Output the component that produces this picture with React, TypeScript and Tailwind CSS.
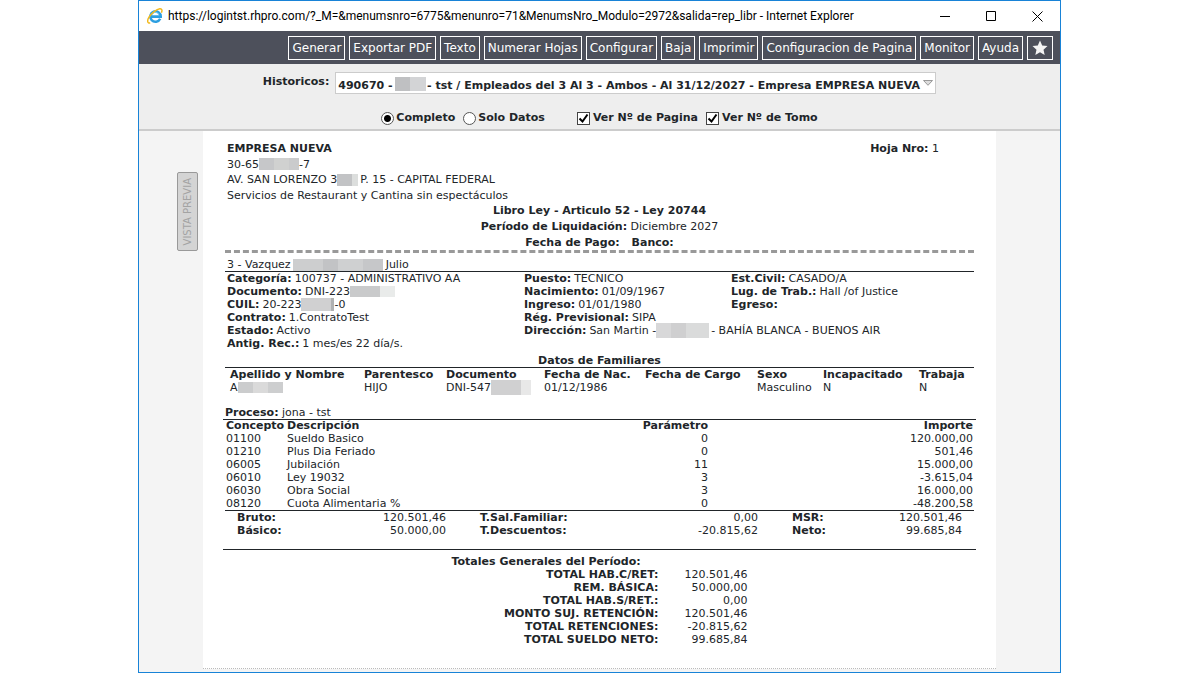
import React, { useState } from "react";

/* TYPES */
type Field = {
  label: string;
  value: React.ReactNode;
};

type RedactedProps = {
  parts: string[];
  className?: string;
};

/* DATA */
const actions: string[] = [
  "Generar",
  "Exportar PDF",
  "Texto",
  "Numerar Hojas",
  "Configurar",
  "Baja",
  "Imprimir",
  "Configuracion de Pagina",
  "Monitor",
  "Ayuda",
];

const concepts: string[][] = [
  ["01100", "Sueldo Basico", "0", "120.000,00"],
  ["01210", "Plus Dia Feriado", "0", "501,46"],
  ["06005", "Jubilación", "11", "15.000,00"],
  ["06010", "Ley 19032", "3", "-3.615,04"],
  ["06030", "Obra Social", "3", "16.000,00"],
  ["08120", "Cuota Alimentaria %", "0", "-48.200,58"],
];

const totals: string[][] = [
  ["TOTAL HAB.C/RET:", "120.501,46"],
  ["REM. BÁSICA:", "50.000,00"],
  ["TOTAL HAB.S/RET.:", "0,00"],
  ["MONTO SUJ. RETENCIÓN:", "120.501,46"],
  ["TOTAL RETENCIONES:", "-20.815,62"],
  ["TOTAL SUELDO NETO:", "99.685,84"],
];

/* REDACTED BLOCK */
const Redacted: React.FC<RedactedProps> = ({ parts, className = "h-3" }) => (
  <span className={`flex shrink-0 ${className}`}>
    {parts.map((part, i) => (
      <span
        key={i}
        className={part}
      />
    ))}
  </span>
);

/* TITLE BAR */
const TitleBar = () => (
  <div className="flex h-[30px] items-center bg-white pl-2 font-[Roboto,'Segoe_UI',sans-serif] text-xs text-black">
    <svg
      className="size-4 shrink-0"
      viewBox="0 0 16 16"
      fill="none">
      <path
        d="M13.2 10.8A5.2 5.2 0 1 1 13.7 8.6H4.6"
        stroke="#2d9fe0"
        strokeWidth="2.6"
      />
      <path
        d="M4.6 7.2A3.8 3.8 0 0 1 12 7.2"
        stroke="#7fd0f5"
        strokeWidth="1"
      />
      <path
        d="M3.2 15C.4 15.6-.2 12.8 2 9.2 4.6 5 9.6 1.2 12.8.8c2.4-.2 2.6 1.8 1.6 4"
        stroke="#f2b91d"
        strokeWidth="1.5"
      />
    </svg>
    <span className="ml-[5px] min-w-0 flex-1 truncate">
      https://logintst.rhpro.com/?_M=&amp;menumsnro=6775&amp;menunro=71&amp;MenumsNro_Modulo=2972&amp;salida=rep_libr
      - Internet Explorer
    </span>
    <button
      aria-label="Minimizar"
      className="flex h-full w-[46px] shrink-0 items-center justify-center">
      <svg
        className="size-[11px]"
        viewBox="0 0 11 11"
        stroke="black">
        <path d="M0 5.5h10" />
      </svg>
    </button>
    <button
      aria-label="Maximizar"
      className="flex h-full w-[46px] shrink-0 items-center justify-center">
      <svg
        className="size-[11px]"
        viewBox="0 0 11 11"
        fill="none"
        stroke="black">
        <path d="M.5.5h9v9h-9z" />
      </svg>
    </button>
    <button
      aria-label="Cerrar"
      className="flex h-full w-[46px] shrink-0 items-center justify-center">
      <svg
        className="size-[11px]"
        viewBox="0 0 11 11"
        stroke="black">
        <path d="M.5.5l10 10M10.5.5l-10 10" />
      </svg>
    </button>
  </div>
);

/* TOOLBAR */
const Toolbar = () => (
  <div className="flex h-[33px] items-center justify-end gap-1 bg-[#4d505b] pr-[7px] text-xs text-white">
    {actions.map((action) => (
      <button
        key={action}
        className="h-6 border border-white px-[3px] whitespace-nowrap">
        {action}
      </button>
    ))}
    <button
      aria-label="Favoritos"
      className="flex h-6 w-[26px] items-center justify-center border border-white">
      <svg
        className="size-4"
        viewBox="0 0 16 16"
        fill="#f4f4f4">
        <path d="M8 .6l2.2 5 5.3.5-4 3.6 1.2 5.4L8 12.3l-4.7 2.8 1.2-5.4-4-3.6 5.3-.5z" />
      </svg>
    </button>
  </div>
);

/* FILTERS */
const Filters = () => {
  const [mode, setMode] = useState<string>("completo");
  const [showPage, setShowPage] = useState<boolean>(true);
  const [showVolume, setShowVolume] = useState<boolean>(true);

  const modes = [
    { id: "completo", text: "Completo" },
    { id: "solo", text: "Solo Datos" },
  ];

  const checks = [
    { text: "Ver Nº de Pagina", value: showPage, set: setShowPage },
    { text: "Ver Nº de Tomo", value: showVolume, set: setShowVolume },
  ];

  return (
    <div className="flex h-[67px] flex-col border-b-2 border-[#ccc] bg-[#eee] pt-2 font-bold">
      <div className="flex justify-center gap-[6px]">
        <label
          htmlFor="historicos"
          className="pt-[3px]">
          Historicos:
        </label>
        <div className="relative">
          <select
            id="historicos"
            className="block h-[22px] w-[601px] appearance-none border border-[#ccc] bg-white pl-[2px] pt-1 font-bold">
            <option>
              {"490670 -" +
                "\u00a0".repeat(9) +
                "- tst / Empleados del 3 Al 3 - Ambos - Al 31/12/2027 - Empresa EMPRESA NUEVA"}
            </option>
          </select>
          <div className="pointer-events-none absolute top-[5px] left-[60px]">
            <Redacted
              className="h-[14px]"
              parts={["w-[15px] bg-[#bfc0c2]", "w-4 bg-[#d3d4d6]"]}
            />
          </div>
          <svg
            className="pointer-events-none absolute top-2 right-[3px] h-[6px] w-[10px]"
            viewBox="0 0 10 6"
            fill="#ddd"
            stroke="#999">
            <path d="M.5.5h9L5 5.3z" />
          </svg>
        </div>
      </div>

      <div className="mt-4 flex items-center justify-center">
        {modes.map((item) => (
          <label
            key={item.id}
            className="mr-2 flex items-center gap-[2px]">
            <input
              type="radio"
              name="modo"
              checked={mode === item.id}
              onChange={() => setMode(item.id)}
              className="mt-[2px] size-[13px] appearance-none rounded-full border border-[#555] bg-white checked:bg-[radial-gradient(circle,#000_3px,#fff_4px)]"
            />
            {item.text}
          </label>
        ))}
        <div className="ml-6 flex gap-2">
          {checks.map((item) => (
            <label
              key={item.text}
              className="flex items-center gap-[3px]">
              <span className="relative mt-[2px] size-[13px]">
                <input
                  type="checkbox"
                  checked={item.value}
                  onChange={() => item.set(!item.value)}
                  className="peer block size-[13px] appearance-none border border-[#444] bg-white"
                />
                <svg
                  className="pointer-events-none absolute inset-0 hidden size-[13px] peer-checked:block"
                  viewBox="0 0 13 13"
                  fill="none"
                  stroke="black"
                  strokeWidth="2">
                  <path d="M2.5 6.5l3 3 5-7" />
                </svg>
              </span>
              {item.text}
            </label>
          ))}
        </div>
      </div>
    </div>
  );
};

/* COMPANY */
const CompanyHeader = () => (
  <div className="border-b-[3px] border-dashed border-[#999]">
    <div className="flex justify-between pr-[35px] pl-[2px]">
      <div className="grid h-[62px] auto-rows-fr items-center">
        <b>EMPRESA NUEVA</b>
        <div className="flex items-center">
          30-65
          <Redacted
            parts={[
              "w-[15px] bg-[#c6c7c9]",
              "w-[15px] bg-[#d0d1d0]",
              "w-[10px] bg-[#cacbcc]",
            ]}
          />
          -7
        </div>
        <div className="flex items-center">
          AV. SAN LORENZO 3
          <Redacted
            className="mr-[2px] h-3"
            parts={["w-[15px] bg-[#c2c3c5]", "w-[6px] bg-[#dcdedd]"]}
          />
          P. 15 - CAPITAL FEDERAL
        </div>
        <div>Servicios de Restaurant y Cantina sin espectáculos</div>
      </div>
      <div className="pt-px">
        <b>Hoja Nro:</b> 1
      </div>
    </div>
    <div className="grid h-[47px] auto-rows-fr items-center text-center">
      <b>Libro Ley - Articulo 52 - Ley 20744</b>
      <div>
        <b>Período de Liquidación:</b> Diciembre 2027
      </div>
      <div className="flex justify-center gap-3 font-bold">
        <span>Fecha de Pago:</span>
        <span>Banco:</span>
      </div>
    </div>
  </div>
);

/* EMPLOYEE */
const FieldList: React.FC<{ fields: Field[] }> = ({ fields }) => (
  <div>
    {fields.map(({ label, value }) => (
      <div
        key={label}
        className="flex h-[13px] items-center whitespace-nowrap">
        <b className="mr-[3px]">{label}</b>
        {value}
      </div>
    ))}
  </div>
);

const Employee = () => (
  <>
    <div className="flex items-center border-b border-[#212529] pt-[5px] pl-[2px]">
      3 - Vazquez
      <Redacted
        className="mr-[3px] ml-[2px] h-3"
        parts={[
          "w-[30px] bg-[#cdcecf]",
          "w-[15px] bg-[#c2c3c5]",
          "w-[25px] bg-[#cfd0d1]",
          "w-5 bg-[#c6c7c9]",
        ]}
      />
      Julio
    </div>
    <div className="grid grid-cols-[minmax(0,297fr)_minmax(0,207fr)_minmax(0,243fr)] pl-[2px]">
      <FieldList
        fields={[
          { label: "Categoría:", value: "100737 - ADMINISTRATIVO AA" },
          {
            label: "Documento:",
            value: (
              <>
                DNI-223
                <Redacted
                  className="h-[11px]"
                  parts={["w-[30px] bg-[#c9cacb]", "w-[15px] bg-[#e9ebea]"]}
                />
              </>
            ),
          },
          {
            label: "CUIL:",
            value: (
              <>
                20-223
                <Redacted
                  className="h-[13px]"
                  parts={["w-[30px] bg-[#d0d0d1]", "w-[3px] bg-[#b0b1b2]"]}
                />
                -0
              </>
            ),
          },
          { label: "Contrato:", value: "1.ContratoTest" },
          { label: "Estado:", value: "Activo" },
          { label: "Antig. Rec.:", value: "1 mes/es 22 día/s." },
        ]}
      />
      <FieldList
        fields={[
          { label: "Puesto:", value: "TECNICO" },
          { label: "Nacimiento:", value: "01/09/1967" },
          { label: "Ingreso:", value: "01/01/1980" },
          { label: "Rég. Previsional:", value: "SIPA" },
          {
            label: "Dirección:",
            value: (
              <>
                San Martin -
                <Redacted
                  className="mr-[2px] h-[15px]"
                  parts={[
                    "w-[15px] bg-[#d8d8d9]",
                    "w-[15px] bg-[#cfcfd0]",
                    "w-[23px] bg-[#dadbdb]",
                  ]}
                />
                - BAHÍA BLANCA - BUENOS AIR
              </>
            ),
          },
        ]}
      />
      <FieldList
        fields={[
          { label: "Est.Civil:", value: "CASADO/A" },
          { label: "Lug. de Trab.:", value: "Hall /of Justice" },
          { label: "Egreso:", value: "" },
        ]}
      />
    </div>
  </>
);

/* FAMILY */
const Family = () => (
  <table className="mt-1 w-full table-fixed text-left whitespace-nowrap">
    <caption className="border-b border-[#212529] font-bold">
      Datos de Familiares
    </caption>
    <colgroup>
      <col className="w-[134px]" />
      <col className="w-[82px]" />
      <col className="w-[98px]" />
      <col className="w-[101px]" />
      <col className="w-[112px]" />
      <col className="w-[66px]" />
      <col className="w-[96px]" />
      <col />
    </colgroup>
    <thead>
      <tr>
        {[
          "Apellido y Nombre",
          "Parentesco",
          "Documento",
          "Fecha de Nac.",
          "Fecha de Cargo",
          "Sexo",
          "Incapacitado",
          "Trabaja",
        ].map((head) => (
          <th
            key={head}
            className="p-0 pl-[5px]">
            {head}
          </th>
        ))}
      </tr>
    </thead>
    <tbody>
      <tr>
        <td className="p-0 pl-[5px]">
          <div className="flex h-[13px] items-center">
            A
            <Redacted
              className="h-[11px]"
              parts={[
                "w-[15px] bg-[#cbcccd]",
                "w-[15px] bg-[#dadada]",
                "w-[15px] bg-[#cdcecf]",
              ]}
            />
          </div>
        </td>
        <td className="p-0 pl-[5px]">HIJO</td>
        <td className="p-0 pl-[5px]">
          <div className="flex h-[13px] items-center">
            DNI-547
            <Redacted
              className="h-[15px]"
              parts={["w-[30px] bg-[#d0d0d1]", "w-[10px] bg-[#e8e8e8]"]}
            />
          </div>
        </td>
        <td className="p-0 pl-[5px]">01/12/1986</td>
        <td className="p-0 pl-[5px]" />
        <td className="p-0 pl-[5px]">Masculino</td>
        <td className="p-0 pl-[5px]">N</td>
        <td className="p-0 pl-[5px]">N</td>
      </tr>
    </tbody>
  </table>
);

/* PROCESS */
const Process = () => (
  <div className="-mx-[2px] mt-3 border-b border-[#212529] pb-3">
    <div className="border-b border-[#212529] pl-[2px]">
      <b>Proceso:</b> jona - tst
    </div>
    <table className="w-full table-fixed text-left">
      <colgroup>
        <col className="w-[60px]" />
        <col />
        <col className="w-[188px]" />
        <col className="w-[265px]" />
      </colgroup>
      <thead>
        <tr className="leading-3">
          <th className="p-0 pl-[3px]">Concepto</th>
          <th className="p-0 pl-1">Descripción</th>
          <th className="p-0 pr-[3px] text-right">Parámetro</th>
          <th className="p-0 pr-[3px] text-right">Importe</th>
        </tr>
      </thead>
      <tbody>
        {concepts.map(([code, name, param, amount]) => (
          <tr key={code}>
            <td className="p-0 pl-[3px]">{code}</td>
            <td className="p-0 pl-1">{name}</td>
            <td className="p-0 pr-[3px] text-right">{param}</td>
            <td className="p-0 pr-[3px] text-right">{amount}</td>
          </tr>
        ))}
      </tbody>
    </table>
    <div className="mx-[2px] grid grid-cols-[243fr_312fr_194fr] border-t border-[#212529]">
      <Summary
        className="pr-[22px] pl-3"
        rows={[
          ["Bruto:", "120.501,46"],
          ["Básico:", "50.000,00"],
        ]}
      />
      <Summary
        className="pr-[22px] pl-3"
        rows={[
          ["T.Sal.Familiar:", "0,00"],
          ["T.Descuentos:", "-20.815,62"],
        ]}
      />
      <Summary
        className="pr-3 pl-3"
        rows={[
          ["MSR:", "120.501,46"],
          ["Neto:", "99.685,84"],
        ]}
      />
    </div>
  </div>
);

const Summary: React.FC<{ rows: string[][]; className: string }> = ({
  rows,
  className,
}) => (
  <div className={className}>
    {rows.map(([label, value]) => (
      <div
        key={label}
        className="flex justify-between">
        <b>{label}</b>
        <span>{value}</span>
      </div>
    ))}
  </div>
);

/* TOTALS */
const Totals = () => (
  <div className="mx-auto mt-[5px] w-[296px]">
    <b>Totales Generales del Período:</b>
    <table className="w-full text-right">
      <tbody>
        {totals.map(([label, value]) => (
          <tr key={label}>
            <th className="w-[207px] p-0">{label}</th>
            <td className="p-0">{value}</td>
          </tr>
        ))}
      </tbody>
    </table>
  </div>
);

const App = () => {
  return (
    <div className="flex min-h-screen bg-white pr-[139px] pl-[138px] font-['DejaVu_Sans',Verdana,sans-serif] text-[11px] leading-[13px] text-[#212529]">
      <div className="flex min-w-0 flex-1 flex-col border border-[#1883d7]">
        <TitleBar />
        <Toolbar />
        <Filters />
        <div className="flex flex-1 bg-[#f4f4f4]">
          <aside className="w-16 shrink-0 pt-[41px] pl-[38px]">
            <button className="flex h-[79px] w-[21px] items-center justify-center rounded-xs border border-[#999] bg-[#d4d4d4] text-[10px] whitespace-nowrap text-[#a3a3a3]">
              <span className="rotate-180 [writing-mode:vertical-rl]">
                VISTA PREVIA
              </span>
            </button>
          </aside>
          <main className="mb-[3px] min-w-0 flex-1 border-b border-dotted border-[#bbb] bg-white px-[22px] pt-[10px]">
            <CompanyHeader />
            <Employee />
            <Family />
            <Process />
            <Totals />
          </main>
          <div className="w-16 shrink-0" />
        </div>
      </div>
    </div>
  );
};

export default App;
